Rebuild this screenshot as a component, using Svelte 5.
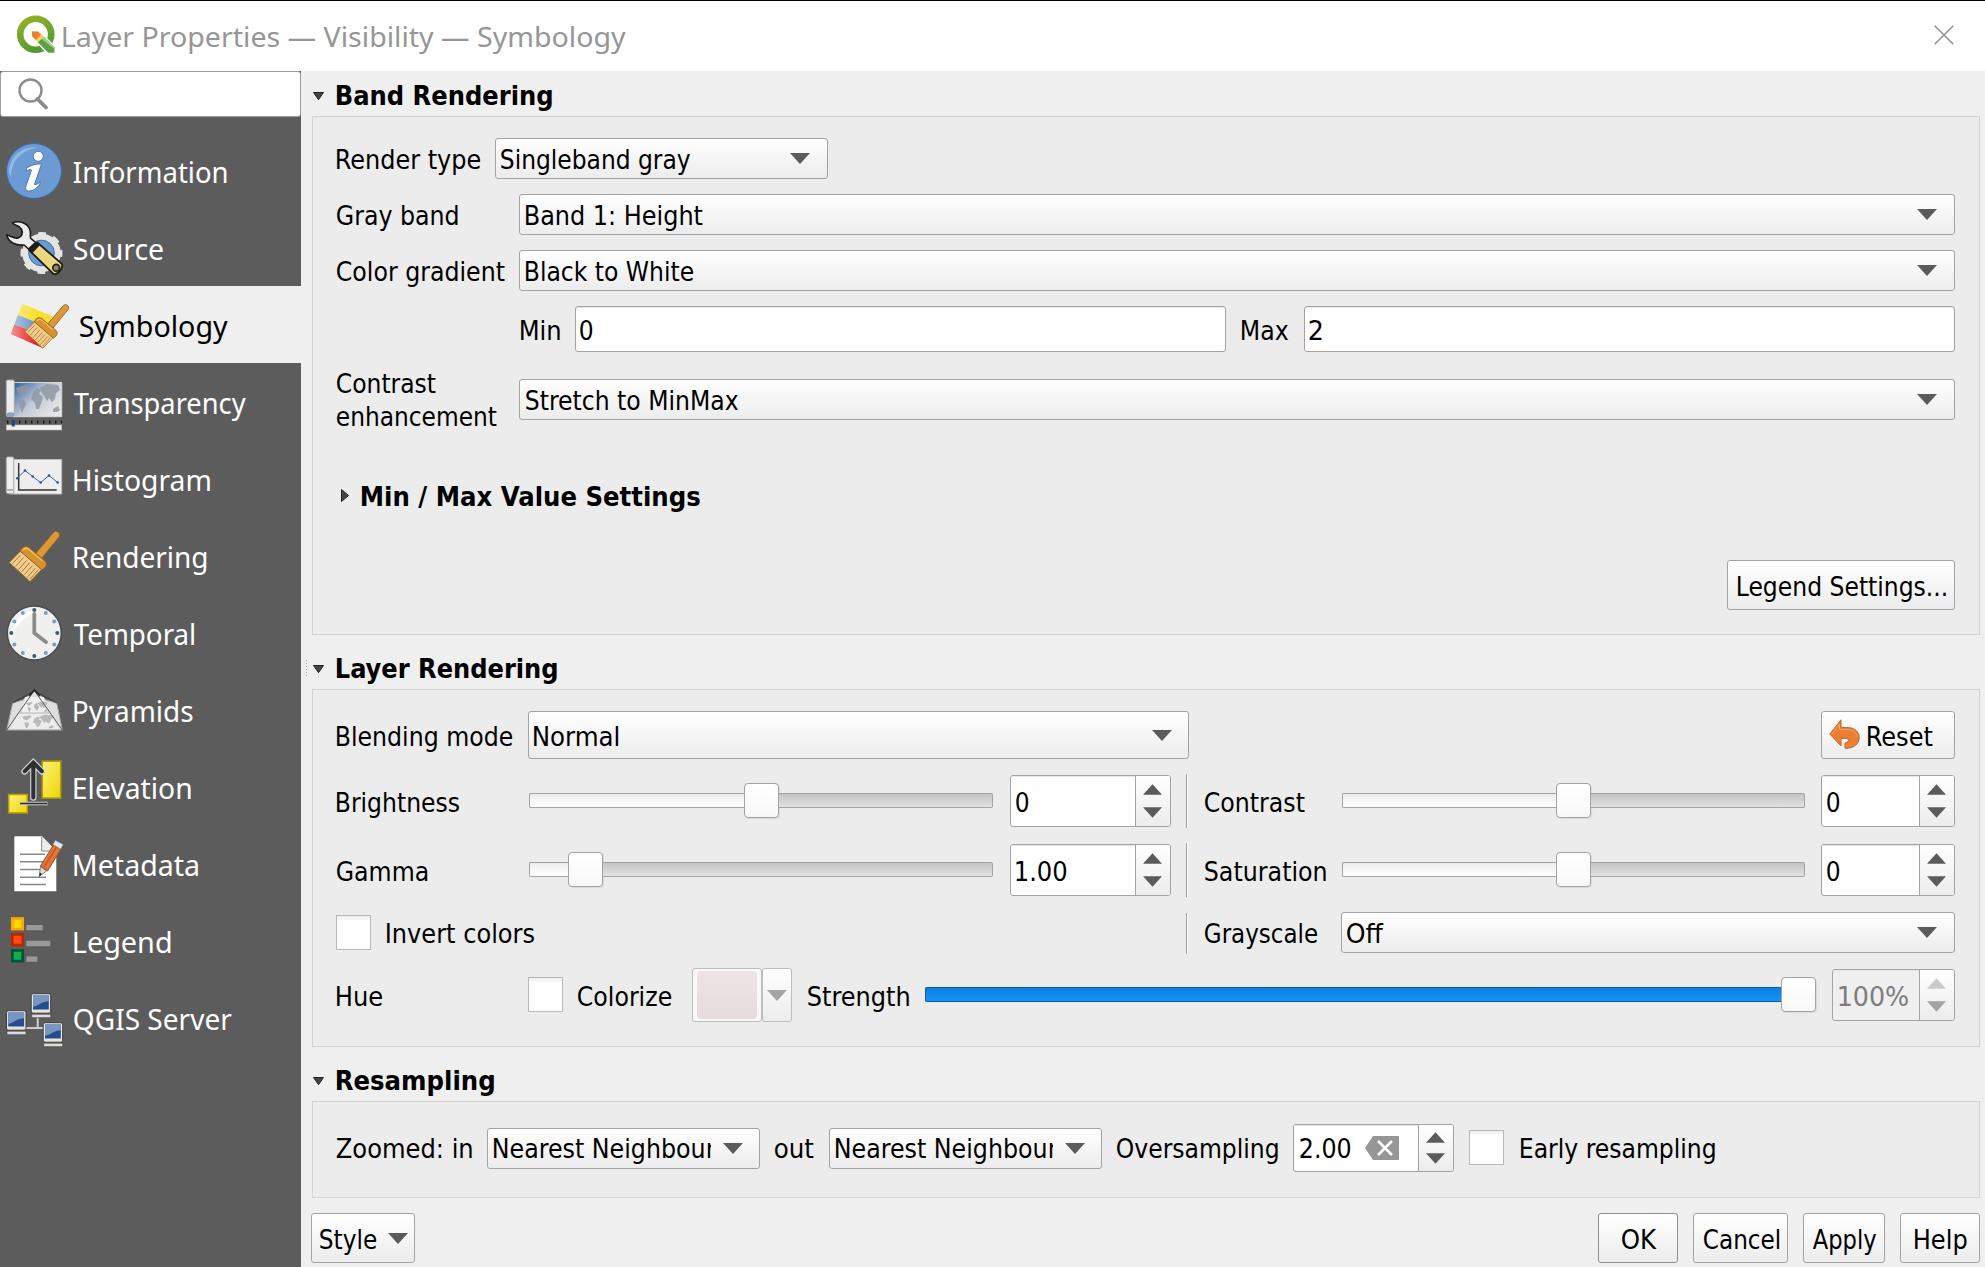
<script>
  // Scales a text run horizontally so that its inked width equals the given number of pixels.
  function fit(node, width) {
    const ctx = document.createElement('canvas').getContext('2d');
    const cs = getComputedStyle(node);
    ctx.font = `${cs.fontWeight} ${cs.fontSize} ${cs.fontFamily}`;
    const m = ctx.measureText(node.textContent);
    const ink = m.actualBoundingBoxLeft + m.actualBoundingBoxRight;
    const s = width / ink;
    node.style.transform = `translateX(${m.actualBoundingBoxLeft * s + 0.8}px) scaleX(${s})`;
  }

  const nav = [
    ['Information', 153, 'info'],
    ['Source', 89, 'source'],
    ['Symbology', 148, 'symbology'],
    ['Transparency', 172, 'transparency'],
    ['Histogram', 136, 'histogram'],
    ['Rendering', 133, 'rendering'],
    ['Temporal', 121, 'temporal'],
    ['Pyramids', 119, 'pyramids'],
    ['Elevation', 117, 'elevation'],
    ['Metadata', 124, 'metadata'],
    ['Legend', 97, 'legend'],
    ['QGIS Server', 158, 'server']
  ];
  const selected = 'Symbology';
  const hours = Array.from({ length: 12 }, (_, i) => ({
    x: 28.3 + 23 * Math.sin((i * Math.PI) / 6),
    y: 28 - 23 * Math.cos((i * Math.PI) / 6),
    main: i % 3 === 0
  }));
  const monitors = [[24.7, 3.2], [0, 20.2], [36.7, 32.2]];
</script>

{#snippet t(text, w)}<span class="fit" style:width="{w}px"><span class="run" use:fit={w}>{text}</span></span>{/snippet}

{#snippet down()}<svg class="arrow" viewBox="0 0 20 11"><path d="M0 0H20L10 11Z" /></svg>{/snippet}

{#snippet combo(text, w, cls)}
  <div class="combo {cls}"><div class="clip">{@render t(text, w)}</div>{@render down()}</div>
{/snippet}

{#snippet spin(text, w, cls, clear)}
  <div class="spin {cls}">
    <div class="val">
      {@render t(text, w)}
      {#if clear}
        <svg class="clear" viewBox="0 0 34 24"><path d="M0 12L8 0H34V24H8Z" fill="#969696" /><path d="M13 5L27 19M27 5L13 19" stroke="#fff" stroke-width="2.6" /></svg>
      {/if}
    </div>
    <div class="steps">
      <svg class="arrow up" viewBox="0 0 20 11"><path d="M0 11H20L10 0Z" /></svg>
      {@render down()}
    </div>
  </div>
{/snippet}

{#snippet slider(cls, pos)}
  <div class="slider {cls}">
    <div class="done" style:width="{pos}px"></div><div class="handle"></div><div class="rest"></div>
  </div>
{/snippet}

{#snippet header(text, w)}
  <div class="header"><svg class="tri" viewBox="0 0 11 8"><path d="M0.5 0.5H10.5L5.5 7.7Z" /></svg>{@render t(text, w)}</div>
{/snippet}

{#snippet brush()}
  <path d="M47.5 4.5C50 1.5 55.5 5 53 9L35.5 30.5L29.5 25.5Z" fill="#d9993a" stroke="#94611a" />
  <path d="M14.5 23L3.3 34.5L24 53.5L36 41Z" fill="#f0cd8d" stroke="#a87420" />
  <path d="M14.5 27L6.5 35.5M17.5 29.5L9.5 38.5M20.5 32.5L12.5 41.5M23.5 35L15.5 44M26.5 37.5L18.5 46.5M29.5 40L21 49.5M32.5 41.5L24 51" stroke="#a87a35" stroke-width="1" />
  <path d="M14 23C16 19 20 17 23 19.5L39 33C42 36 40 39.5 36 42Z" fill="#d6922f" stroke="#94611a" />
  <path d="M17 22C19 19.5 21 20 23 21.5L36 32.5" fill="none" stroke="#efbd69" stroke-width="1.3" />
{/snippet}

{#snippet continents()}
  <path d="M10 14L20 11L23 14L19 19L16 22L12 19ZM13 26L18 26L20 30L16 39L14 34ZM27 19L31 14L35 16L33 20L37 23L36 27L33 35L30 35L29 29L25 25ZM34 14L41 10L52 11L54 16L50 19L49 25L46 28L43 24L41 27L38 22L36 19ZM47 35L52 32L54 36L51 38L47 38Z" />
{/snippet}

{#snippet icon(name)}
  <svg class="icon" viewBox="0 0 56 56" fill="none">
    {#if name === 'info'}
      <circle cx="28" cy="28" r="27.5" fill="#6b9bd2" stroke="#3a68a6" />
      <path d="M3 30C3 13 17 3 31 4.500C16 8 6 16 5 33Z" fill="#9dbfe6" opacity=".8" />
      <circle cx="32.300" cy="13.300" r="5" fill="#fff" stroke="#4d7ab0" />
      <path d="M20.500 25C25 22 31 20.500 35.500 21L28.500 41.500C30.500 42 33 40 34.500 38.500C33.500 44 27 48.500 22.500 48C19 47.500 19.500 44.500 20.500 41.500L25.500 27C24 26 22.500 27 20.500 28Z" fill="#fff" stroke="#4d7ab0" />
    {:else if name === 'source'}
      <circle cx="35.500" cy="33" r="16" fill="#6b9bd2" stroke="#e4e4e4" stroke-width="6.500" />
      <circle cx="35.500" cy="33" r="18.700" stroke="#e4e4e4" stroke-width="4.600" stroke-dasharray="7.500 7.187" stroke-dashoffset="3.750" />
      <circle cx="35.500" cy="33" r="12.800" stroke="#3f6da8" />
      <path d="M23 30L31.300 22.500L55.500 43.500C58 47 52 55.500 47.500 54Z" fill="#ecd87c" stroke="#1d1d1d" stroke-width="1.800" />
      <path d="M23 30L31.300 22.500L34 25L26 33.500Z" fill="#1d1d1d" />
      <path d="M6.500 3C13 0 22 3 24 10C25 13 24 16 24.500 18L29.500 22.500L22.500 29L18 25C10 26 2 22 .8 15C5 16 8 19 12 18C17 16 17.500 11 14 7.500C12 5.500 9 5.500 6.500 3Z" fill="#ececec" stroke="#1d1d1d" stroke-width="1.600" />
      <circle cx="50.200" cy="47.800" r="3.400" fill="#8f875c" stroke="#1d1d1d" stroke-width="1.600" />
    {:else if name === 'symbology'}
      <defs><linearGradient id="flag" x1="0" x2="1"><stop offset="0" stop-color="#fff" stop-opacity=".5" /><stop offset=".6" stop-color="#fff" stop-opacity="0" /></linearGradient></defs>
      <path d="M11.500 7L41 19L37 30L7 18Z" fill="#f8e02c" /><path d="M7 18L37 30L34 40L3.500 27.500Z" fill="#6b95cb" /><path d="M3.500 27.500L35 40L31.500 51L0 37Z" fill="#e8211d" />
      <path d="M11.500 7L41 19L31.500 51L0 37Z" fill="url(#flag)" />
      <g transform="translate(11 4.700) scale(.87)">{@render brush()}</g>
    {:else if name === 'transparency'}
      <defs><linearGradient id="sea" x1="0" y1="0" x2="1" y2=".7"><stop offset="0" stop-color="#2d5aa0" /><stop offset=".55" stop-color="#c3cbd8" /><stop offset="1" stop-color="#e6e6e6" /></linearGradient></defs>
      <path d="M7 8.500H55.700V42.700H7Z" fill="url(#sea)" stroke="#d8d8d8" />
      <g fill="#8f98a5" opacity=".85">{@render continents()}</g>
      <rect x=".3" y="6" width="8" height="36.500" rx="1.500" fill="#ececec" stroke="#aaa" />
      <path d="M.5 40C2 38 6 38 8 39V42.500H.5Z" fill="#8da1c2" />
      <path d="M1 48H56" stroke="#161616" stroke-width="3" stroke-dasharray="1.400 4.600" />
      <rect x=".3" y="51" width="55.400" height="5" fill="#f1f1f1" stroke="#bbb" stroke-width=".6" />
      <rect x="5.700" y="46" width="3" height="6.500" fill="#214a8c" />
    {:else if name === 'histogram'}
      <path d="M7 8.500H55.700V43H3Z" fill="#eee" stroke="#bbb" />
      <rect x=".3" y="6" width="7.500" height="36.500" rx="1.500" fill="#eee" stroke="#aaa" />
      <path d="M1 39H7" stroke="#777" />
      <path d="M12.700 12V39H50.700" stroke="#333" stroke-width="1.500" />
      <path d="M11.300 27.200L19 19.500L26.700 25.500L34.700 31.500L43 24.500L51.700 31.500" stroke="#3d5f9a" stroke-width="1" />
      <g fill="#2f5597"><circle cx="11.300" cy="27.200" r="1.300" /><circle cx="19" cy="19.500" r="1.300" /><circle cx="26.700" cy="25.500" r="1.300" /><circle cx="34.700" cy="31.500" r="1.300" /><circle cx="43" cy="24.500" r="1.300" /><circle cx="51.700" cy="31.500" r="1.300" /></g>
    {:else if name === 'rendering'}
      {@render brush()}
    {:else if name === 'temporal'}
      <circle cx="28.300" cy="28" r="27" fill="#f0f0ee" stroke="#4a4d50" stroke-width="1.500" />
      <path d="M6 34C4 16 18 5 32 6C18 12 9 20 6 34Z" fill="#fff" />
      {#each hours as h}<circle cx={h.x} cy={h.y} r="2" fill={h.main ? '#3f5a78' : '#7d9dc0'} />{/each}
      <path d="M28.300 9V28L40 37" stroke="#8b8d88" stroke-width="3.800" stroke-linecap="round" />
    {:else if name === 'pyramids'}
      <path d="M6.700 21L17 18L28.300 8.500L40 18L50.700 21L56.300 48H.7Z" fill="#dedede" stroke="#a8a8a8" />
      <path d="M19 15H38L40 31H16Z" fill="#f0f0f0" /><path d="M12 31H45L52 47H4Z" fill="#ececec" />
      <g fill="#b9b9b9"><g transform="translate(9 28) scale(.72 .48)">{@render continents()}</g><g transform="translate(15.500 16) scale(.48 .36)">{@render continents()}</g></g>
      <path d="M6.700 21L28.300 9L50.700 21" stroke="#333" stroke-width="1.400" stroke-opacity=".7" />
      <path d="M.7 48L28.300 8.500L56.300 48" stroke="#5b5b5b" stroke-width="1" /><path d="M13 31H44" stroke="#b5b5b5" stroke-width="1" />
      <path d="M23 14L28.300 8L34 14" stroke="#222" stroke-width="1.600" />
    {:else if name === 'elevation'}
      <defs><linearGradient id="gold" x1="0" y1="0" x2="1" y2="1"><stop offset="0" stop-color="#fdf17a" /><stop offset="1" stop-color="#eed500" /></linearGradient></defs>
      <rect x="36.300" y="2.200" width="18.400" height="36.800" fill="url(#gold)" stroke="#bb9d00" stroke-width="1.500" />
      <rect x="2.700" y="35.500" width="18.600" height="18.400" fill="url(#gold)" stroke="#bb9d00" stroke-width="1.500" />
      <path d="M27.300 38.500V5M18.500 12.500L27.300 3.500L36 12.500" stroke="#cfcfcf" stroke-width="6.400" stroke-linecap="round" />
      <path d="M27.300 38.500V5M18.800 12.200L27.300 3.500L35.700 12.200" stroke="#2b3135" stroke-width="4" stroke-linecap="round" />
      <path d="M14 44.500H41.500" stroke="#cfcfcf" stroke-width="3.600" /><path d="M14 44.500H41" stroke="#2b3135" stroke-width="1.600" />
    {:else if name === 'metadata'}
      <path d="M9 .3H36L50.300 15V55.200H9Q8.300 55.200 8.300 54V1Z" fill="#fff" />
      <path d="M35.700 .5V15H50" fill="#ededed" stroke="#8a8a8a" />
      <path d="M14 18.200H39M14 25.800H38M14 33.500H34M14 41.200H40M14 48.500H40" stroke="#8a8a8a" stroke-width="1.500" />
      <path d="M33.300 40.500L34.500 30.500L40.500 35Z" fill="#ddd" stroke="#555" stroke-width=".7" /><path d="M33.300 40.500L33.800 36.500L36 38Z" fill="#222" />
      <path d="M34.500 30L47.500 9L55 13L41.500 35Z" fill="#e0763a" stroke="#9c4b1c" /><path d="M38 31L50.500 11" stroke="#c4581f" stroke-width="1.500" />
      <path d="M47 8.500L49.300 4.500L57 8.500L54.700 13Z" fill="#e6e6e6" stroke="#999" stroke-width=".6" />
    {:else if name === 'legend'}
      <rect x="6.300" y="5.500" width="10.400" height="10.600" fill="#ffd800" stroke="#f8a60c" stroke-width="2.700" />
      <rect x="6.300" y="21.500" width="10.400" height="10.600" fill="#ff4c0a" stroke="#bd2600" stroke-width="2.700" />
      <rect x="6.300" y="37.500" width="10.400" height="10.600" fill="#0bb054" stroke="#04542f" stroke-width="2.700" />
      <path d="M20.300 14.700H36.700M20.300 30.500H44.300M20.300 46.200H31.300" stroke="#999" stroke-width="5.300" />
    {:else if name === 'server'}
      <path d="M31.700 27V38M20 38H37" stroke="#ccc" stroke-width="2" />
      {#each monitors as [x, y]}
        <g transform="translate({x} {y})">
          <rect x=".5" y=".5" width="19.500" height="19.500" rx="2" fill="#e4e4e0" stroke="#3d3d3d" />
          <rect x="2.300" y="2.300" width="15.800" height="14" fill="#234d8f" /><path d="M2.300 2.300H18.100V8C11 8 8 13 2.300 13.500Z" fill="#7795c0" />
          <path d="M1 21H20V24.500H1Z" fill="#dcdcd8" stroke="#4a4a4a" stroke-width=".7" />
        </g>
      {/each}
    {/if}
  </svg>
{/snippet}

<div class="window">
  <div class="titlebar">
    <svg class="logo" viewBox="0 0 39 38">
      <defs><linearGradient id="q" x1="0" y1="0" x2=".4" y2="1"><stop offset="0" stop-color="#93b127" /><stop offset="1" stop-color="#589a32" /></linearGradient></defs>
      <circle cx="19.700" cy="18.300" r="15.500" fill="none" stroke="url(#q)" stroke-width="6.600" />
      <path d="M28 19L39.500 30.500V38H31L21 27Z" fill="#fff" />
      <path d="M27.500 20.500L38.500 31.500V36.700H32.300L21.500 26Z" fill="#5c9f48" /><path d="M27.500 20.500L38.500 31.500V33L25 22.500Z" fill="#a5cf88" />
      <path d="M16 15.500H22L28 20.500L22 26.500L16 20Z" fill="#f3d75b" /><path d="M16 15.500H22L25.200 18.500L20 24L16 20Z" fill="#ed7d31" />
    </svg>
    {@render t('Layer Properties — Visibility — Symbology', 563)}
    <svg class="close" viewBox="0 0 20 20"><path d="M.7 .7L19.300 19.300M19.300 .7L.7 19.300" stroke="#8f8f8f" stroke-width="1.500" /></svg>
  </div>

  <div class="body">
    <div class="sidebar">
      <div class="search"><svg viewBox="0 0 32 32" fill="none"><circle cx="13.500" cy="12.500" r="11" stroke="#8c8c8c" stroke-width="2.400" /><path d="M20.500 21L29 29.500" stroke="#8c8c8c" stroke-width="3.800" stroke-linecap="round" /></svg></div>
      <div class="nav">
        {#each nav as [name, w, ic]}
          <div class="item" class:selected={name === selected}>{@render icon(ic)}{@render t(name, w)}</div>
        {/each}
      </div>
    </div>
    <div class="splitter"><i></i></div>

    <div class="main">
      {@render header('Band Rendering', 215)}
      <div class="frame band">
        <div class="row h41">{@render t('Render type', 144)}{@render combo('Singleband gray', 190, 'type')}</div>
        <div class="row h41"><div class="lab">{@render t('Gray band', 121)}</div>{@render combo('Band 1: Height', 177, 'grow')}</div>
        <div class="row h41"><div class="lab">{@render t('Color gradient', 168)}</div>{@render combo('Black to White', 168, 'grow')}</div>
        <div class="row minmax">{@render t('Min', 39)}<div class="field first">{@render t('0', 13)}</div>{@render t('Max', 47)}<div class="field">{@render t('2', 13)}</div></div>
        <div class="row h41 contrast"><div class="lab two">{@render t('Contrast', 99)}{@render t('enhancement', 160)}</div>{@render combo('Stretch to MinMax', 213, 'grow')}</div>
        <div class="row sub"><svg class="side" viewBox="0 0 8 13"><path d="M.5 .5V12.500L7.500 6.500Z" /></svg>{@render t('Min / Max Value Settings', 338)}</div>
        <div class="row end"><div class="btn legend">{@render t('Legend Settings...', 208)}</div></div>
      </div>

      <div class="gap"></div>
      {@render header('Layer Rendering', 220)}
      <div class="frame layer">
        <div class="row blend">{@render t('Blending mode', 176)}{@render combo('Normal', 85, 'mode')}
          <div class="btn reset"><svg viewBox="0 0 31 30"><path d="M.8 15L12 .8V8.500H18C26 8.500 30.200 13 30.200 18.500C30.200 25 25 29.500 16 29.300V24C20 23.500 20.500 20 18 19.500H12V27Z" fill="#e87f35" stroke="#c9662a" /><path d="M3 15L10.500 5.500V10.500H18C24 10.500 28 14 28 18" fill="none" stroke="#f2a468" stroke-width="1" /></svg>{@render t('Reset', 65)}</div>
        </div>
        <div class="row h52">
          <div class="lab2">{@render t('Brightness', 123)}</div>{@render slider('left', 215)}{@render spin('0', 13, 'wide', false)}<div class="vline"></div>
          <div class="lab3">{@render t('Contrast', 100)}</div>{@render slider('right', 214)}{@render spin('0', 13, 'narrow', false)}
        </div>
        <div class="row h52 gamma">
          <div class="lab2">{@render t('Gamma', 91)}</div>{@render slider('left', 39)}{@render spin('1.00', 51, 'wide', false)}<div class="vline"></div>
          <div class="lab3">{@render t('Saturation', 121)}</div>{@render slider('right', 214)}{@render spin('0', 13, 'narrow', false)}
        </div>
        <div class="row h41 gray"><div class="check"></div>{@render t('Invert colors', 148)}<div class="vline push"></div><div class="lab3">{@render t('Grayscale', 113)}</div>{@render combo('Off', 37, 'off')}</div>
        <div class="row hue">
          <div class="lab4">{@render t('Hue', 46)}</div><div class="check"></div>{@render t('Colorize', 94)}
          <div class="color"><div class="swatch"><i></i></div><div class="drop">{@render down()}</div></div>
          {@render t('Strength', 101)}{@render slider('blue', 856)}{@render spin('100%', 69, 'off', false)}
        </div>
      </div>

      <div class="gap"></div>
      {@render header('Resampling', 157)}
      <div class="frame resample">
        <div class="row h48">
          {@render t('Zoomed: in', 135)}{@render combo('Nearest Neighbour', 222, 'near')}{@render t('out', 39)}{@render combo('Nearest Neighbour', 222, 'near')}{@render t('Oversampling', 161)}{@render spin('2.00', 51, 'over', true)}<div class="check"></div>{@render t('Early resampling', 194)}
        </div>
      </div>

      <div class="footer">
        <div class="btn style">{@render t('Style', 57)}{@render down()}</div>
        <div class="btn ok">{@render t('OK', 35)}</div>
        <div class="btn cancel">{@render t('Cancel', 76)}</div>
        <div class="btn apply">{@render t('Apply', 64)}</div>
        <div class="btn help">{@render t('Help', 52)}</div>
      </div>
    </div>
  </div>
</div>

<style>
  :global(body) { margin: 0; overflow: hidden; }
  .window { width: 1985px; height: 1267px; box-sizing: border-box; border-top: 1px solid #000; display: flex; flex-direction: column; background: #efefef; color: #000; font: 26px/33px 'DejaVu Sans Condensed', 'DejaVu Sans', sans-serif; overflow: hidden; }
  .window :global(*) { box-sizing: border-box; }
  .window svg { display: block; flex: none; overflow: visible; }
  .fit { display: block; flex: none; padding-top: 4px; white-space: nowrap; }
  .run { display: inline-block; transform-origin: 0 50%; vertical-align: top; }

  .titlebar { height: 70px; flex: none; display: flex; align-items: center; background: #fff; color: #969696; padding: 0 31px 0 16px; font-family: 'Noto Sans', sans-serif; font-size: 27px; }
  .titlebar .fit { margin-left: 7px; padding-top: 0; }
  .logo { width: 39px; height: 38px; margin-top: -2px; }
  .close { width: 20px; height: 20px; margin: -2px 0 0 auto; }

  .body { flex: 1; display: flex; min-height: 0; }
  .sidebar { width: 301px; background: #5c5c5c; flex: none; }
  .search { height: 46px; background: #fff; border: 1px solid #9c9c9c; border-radius: 3px; padding: 6px 0 0 16px; }
  .search svg { width: 32px; height: 32px; }
  .nav { padding-top: 15px; font-family: 'Noto Sans', sans-serif; font-size: 29px; color: #fff; }
  .item { height: 77px; display: flex; align-items: center; gap: 11px; padding-left: 6px; }
  .item .fit { padding-top: 2px; }
  .item.selected { background: #efefef; color: #000; padding-left: 11px; gap: 12px; }
  .icon { width: 56px; height: 56px; }
  .splitter { width: 11px; flex: none; display: flex; align-items: center; justify-content: center; }
  .splitter i { width: 1px; height: 18px; background: repeating-linear-gradient(#aaa 0 1px, transparent 1px 3px); }

  .main { flex: 1; padding-right: 5px; display: flex; flex-direction: column; }
  .header { height: 45px; flex: none; display: flex; align-items: center; font-weight: bold; }
  .header .tri { width: 11px; height: 8px; margin: 4px 12px 0 1px; }
  .header .fit { padding-top: 5px; }
  .tri, .side { fill: #454545; stroke: #222; stroke-width: 1; }
  .gap { height: 9px; flex: none; }
  .frame { flex: none; border: 1px solid #d3d3d3; background: #ececec; padding: 21px 24px 0 23px; }
  .band { height: 519px; }
  .layer { height: 358px; }
  .resample { height: 97px; padding-top: 22px; }
  .row { display: flex; align-items: center; }
  .h41 { height: 41px; margin-bottom: 15px; }
  .h52 { height: 52px; margin-bottom: 17px; }
  .gamma { margin-bottom: 16px; }
  .h48 { height: 48px; }
  .lab { width: 183px; flex: none; }
  .lab.two .fit { padding-top: 0; }
  .lab.two { padding-top: 3px; }
  .lab2 { width: 193px; flex: none; }
  .lab3 { width: 138px; flex: none; }
  .lab4 { width: 192px; flex: none; }

  .combo { height: 41px; border: 1px solid #a3a3a3; border-radius: 3px; background: linear-gradient(#fff, #ececec); display: flex; align-items: center; padding: 0 17px 0 4px; flex: none; justify-content: space-between; }
  .combo .fit { padding-top: 3px; }
  .combo.grow { flex: 1; padding-left: 5px; }
  .combo.type { width: 333px; margin-left: 15px; }
  .combo.mode { width: 661px; height: 48px; margin-left: 16px; padding-right: 16px; }
  .combo.mode .fit { padding-top: 4px; }
  .combo.off { flex: 1; }
  .combo.near { width: 273px; margin: 0 14px 0 16px; padding: 0 16px 0 5px; }
  .near .clip { width: 218px; flex: none; overflow: hidden; }
  .arrow { width: 20px; height: 11px; fill: #5b5b5b; }

  .minmax { height: 46px; padding-left: 184px; margin-bottom: 27px; }
  .field { height: 46px; flex: 1; border: 1px solid #a3a3a3; border-radius: 3px; background: #fff; box-shadow: inset 0 1px #e8e8e8; display: flex; align-items: center; padding-left: 3px; margin: 0 0 0 16px; }
  .field.first { margin-right: 15px; }
  .contrast { margin-bottom: 60px; }
  .sub { height: 30px; font-weight: bold; padding-left: 5px; gap: 12px; }
  .side { width: 8px; height: 13px; }
  .end { margin-top: 50px; justify-content: flex-end; }

  .btn { height: 50px; flex: none; border: 1px solid #a3a3a3; border-radius: 3px; background: linear-gradient(#fff, #ececec); display: flex; align-items: center; justify-content: center; }
  .legend { width: 228px; padding-right: 1px; }
  .reset { height: 48px; width: 134px; margin-left: auto; justify-content: flex-start; padding-left: 7px; gap: 7px; }
  .reset svg { width: 31px; height: 30px; margin-top: -2px; }
  .blend { height: 48px; margin-bottom: 16px; }

  .slider { height: 35px; flex: none; display: flex; align-items: center; margin-top: -2px; }
  .done { height: 15px; flex: none; border: 1px solid #a3a3a3; border-right: 0; background: linear-gradient(#ececec, #fff); border-radius: 2px 0 0 2px; }
  .rest { height: 15px; flex: 1; border: 1px solid #a3a3a3; border-left: 0; background: linear-gradient(#c3c3c3, #e2e2e2); border-radius: 0 2px 2px 0; }
  .handle { width: 35px; height: 35px; flex: none; border: 1px solid #a3a3a3; border-radius: 4px; background: linear-gradient(#fff, #f8f8f8); box-shadow: 1px 1px 1px rgba(0, 0, 0, 0.08); }
  .slider.left { width: 464px; margin-right: 17px; }
  .slider.right { width: 463px; margin-right: 16px; }
  .slider.blue { width: 891px; margin: -2px 16px 0 17px; }
  .blue .done { border-color: #0a5da8; background: linear-gradient(#0b7fe0, #1792f8); }
  .blue .rest { display: none; }

  .spin { height: 52px; flex: none; border: 1px solid #a3a3a3; border-radius: 3px; display: flex; background: #fff; overflow: hidden; }
  .val { flex: 1; display: flex; align-items: center; justify-content: space-between; padding-left: 4px; box-shadow: inset 0 1px #e8e8e8; }
  .steps { width: 35px; border-left: 1px solid #a3a3a3; background: linear-gradient(#fff, #ececec); display: flex; flex-direction: column; align-items: center; justify-content: center; gap: 12px; padding-right: 2px; }
  .steps .arrow { width: 19px; }
  .spin.wide { width: 161px; margin-right: 15px; }
  .spin.narrow { width: 134px; }
  .spin.off { width: 123px; color: #7d7d7d; background: #efefef; }
  .spin.off .val { padding-left: 5px; }
  .spin.off .arrow { fill: #a3a3a3; }
  .spin.off .arrow.up { fill: #cbcbcb; }
  .spin.over { width: 161px; height: 48px; margin: 0 15px 0 16px; }
  .over .val { padding-left: 5px; }
  .over .steps { gap: 10px; }
  .over .fit { padding-top: 3px; }
  .clear { width: 34px; height: 24px; margin-right: 19px; }
  .vline { width: 2px; height: 54px; margin: -1px 16px -1px 0; border-left: 1px solid #a0a0a0; border-right: 1px solid #fff; flex: none; }
  .gray .vline { height: 41px; margin-top: 0; }
  .gray .push { margin-left: 652px; }
  .check { width: 35px; height: 35px; flex: none; border: 1px solid #b9b9b9; background: linear-gradient(#ececec, #fff 5px); margin-right: 15px; }
  .gray .lab3 { width: 137px; }
  .gray .fit { padding-top: 3px; }

  .hue { height: 54px; }
  .hue .check { margin: -2px 14px 0 0; }
  .color { display: flex; height: 54px; margin: 0 15px 0 21px; flex: none; }
  .swatch { width: 70px; border: 1px solid #bdbdbd; border-radius: 3px; background: #f8f8f8; padding: 2px 4px; display: flex; }
  .swatch i { flex: 1; border-radius: 4px; background: linear-gradient(#ede5e5, #e4dcdd); }
  .drop { width: 30px; border: 1px solid #bdbdbd; border-radius: 3px; background: linear-gradient(#fff, #ececec); display: flex; align-items: center; justify-content: center; }
  .drop .arrow { fill: #a5a5a5; }

  .resample .check { margin-top: -2px; margin-right: 16px; }
  .resample .fit { padding-top: 3px; }
  .footer { display: flex; gap: 15px; margin-top: 15px; }
  .style { width: 104px; margin-left: -1px; margin-right: auto; gap: 12px; }
  .ok { width: 80px; border-color: #8f8f8f; }
  .cancel { width: 95px; }
  .apply { width: 82px; }
  .help { width: 80px; }
</style>
